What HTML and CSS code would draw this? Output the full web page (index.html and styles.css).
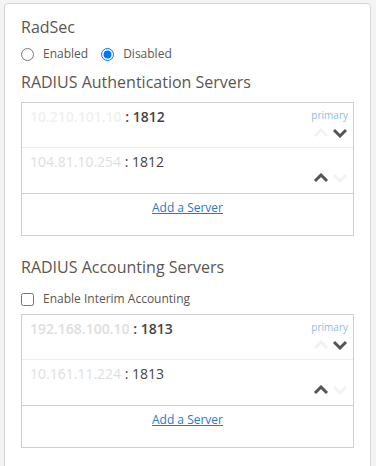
FILE: index.html
```html
<!DOCTYPE html>
<html lang="en">
<head>
    <meta charset="UTF-8">
    <title>RADIUS Settings</title>
    <link rel="stylesheet" href="styles.css">
</head>
<body>
    <div class="card">
        <div class="title">RadSec</div>
        <div class="options">
            <label class="option"><input type="radio" name="radsec"> Enabled</label>
            <label class="option"><input type="radio" name="radsec" checked> Disabled</label>
        </div>

        <!-- Authentication -->
        <div class="title section">RADIUS Authentication Servers</div>
        <div class="server-list">
            <div class="server primary-row">
                <div class="server-top">
                    <span class="addr"><span class="ip">10.210.101.10</span> : 1812</span>
                    <span class="tag">primary</span>
                </div>
                <div class="arrows">
                    <svg class="arrow off" viewBox="0 0 16 10"><path d="M2 8 L8 2 L14 8"/></svg>
                    <svg class="arrow" viewBox="0 0 16 10"><path d="M2 2 L8 8 L14 2"/></svg>
                </div>
            </div>
            <div class="server">
                <div class="server-top">
                    <span class="addr"><span class="ip dim">104.81.10.254</span> : 1812</span>
                </div>
                <div class="arrows">
                    <svg class="arrow" viewBox="0 0 16 10"><path d="M2 8 L8 2 L14 8"/></svg>
                    <svg class="arrow off" viewBox="0 0 16 10"><path d="M2 2 L8 8 L14 2"/></svg>
                </div>
            </div>
            <div class="add-row"><a href="#">Add a Server</a></div>
        </div>

        <!-- Accounting -->
        <div class="title section second">RADIUS Accounting Servers</div>
        <div class="options check">
            <label class="option"><input type="checkbox"> Enable Interim Accounting</label>
        </div>
        <div class="server-list">
            <div class="server primary-row">
                <div class="server-top">
                    <span class="addr"><span class="ip dim">192.168.100.10</span> : 1813</span>
                    <span class="tag">primary</span>
                </div>
                <div class="arrows">
                    <svg class="arrow off" viewBox="0 0 16 10"><path d="M2 8 L8 2 L14 8"/></svg>
                    <svg class="arrow" viewBox="0 0 16 10"><path d="M2 2 L8 8 L14 2"/></svg>
                </div>
            </div>
            <div class="server">
                <div class="server-top">
                    <span class="addr"><span class="ip dim">10.161.11.224</span> : 1813</span>
                </div>
                <div class="arrows">
                    <svg class="arrow" viewBox="0 0 16 10"><path d="M2 8 L8 2 L14 8"/></svg>
                    <svg class="arrow off" viewBox="0 0 16 10"><path d="M2 2 L8 8 L14 2"/></svg>
                </div>
            </div>
            <div class="add-row"><a href="#">Add a Server</a></div>
        </div>
    </div>
</body>
</html>
```

FILE: styles.css
```css
body {
    margin: 3px 5px 0 4px;
    background: #f4f4f4;
    font-family: 'Open Sans', sans-serif;
    color: #555;
    overflow: hidden;
}

.card {
    background: #fff;
    border: 1px solid #d6d6d6;
    border-radius: 4px;
    padding: 11px 16px 30px 16px;
    height: 500px;
}

.title {
    font-size: 16px;
    line-height: 24px;
    color: #5b5652;
}

.title.section {
    margin-top: 7px;
    margin-bottom: 8px;
}

.title.second {
    margin-top: 19px;
    margin-bottom: 0;
}

.options {
    display: flex;
    gap: 13px;
    margin-top: 6px;
    font-size: 12px;
    line-height: 18px;
    color: #5b5652;
}

.options.check {
    margin-top: 11px;
    margin-bottom: 6px;
}

.option {
    display: flex;
    align-items: center;
}

.option input {
    margin: 0 9px 0 0;
    width: 13px;
    height: 13px;
}

.server-list {
    border: 1px solid #cfcfcf;
}

.server {
    padding: 4px 5px 9px 8px;
    border-bottom: 1px solid #ececec;
}

.server + .server {
    padding-bottom: 10px;
    border-bottom-color: #cfcfcf;
}

.server-top {
    display: flex;
    justify-content: space-between;
    align-items: flex-start;
    height: 20px;
}

.addr {
    font-size: 14px;
    line-height: 20px;
    color: #444;
}

.primary-row .addr {
    font-weight: 600;
}

.ip {
    color: #f0f0f0;
}

.ip.dim {
    color: #dedede;
}

.tag {
    font-size: 10px;
    line-height: 14px;
    margin-top: 1px;
    color: #93b9e6;
}

.arrows {
    display: flex;
    justify-content: flex-end;
    gap: 3px;
    margin-top: 1px;
}

.arrow {
    width: 16px;
    height: 10px;
}

.arrow path {
    fill: none;
    stroke: #555;
    stroke-width: 3;
}

.arrow.off path {
    stroke: #f2f2f2;
}

.add-row {
    height: 41px;
    text-align: center;
    font-size: 12px;
    line-height: 18px;
    padding-top: 5px;
    box-sizing: border-box;
}

.add-row a {
    color: #2b78c9;
}
```
